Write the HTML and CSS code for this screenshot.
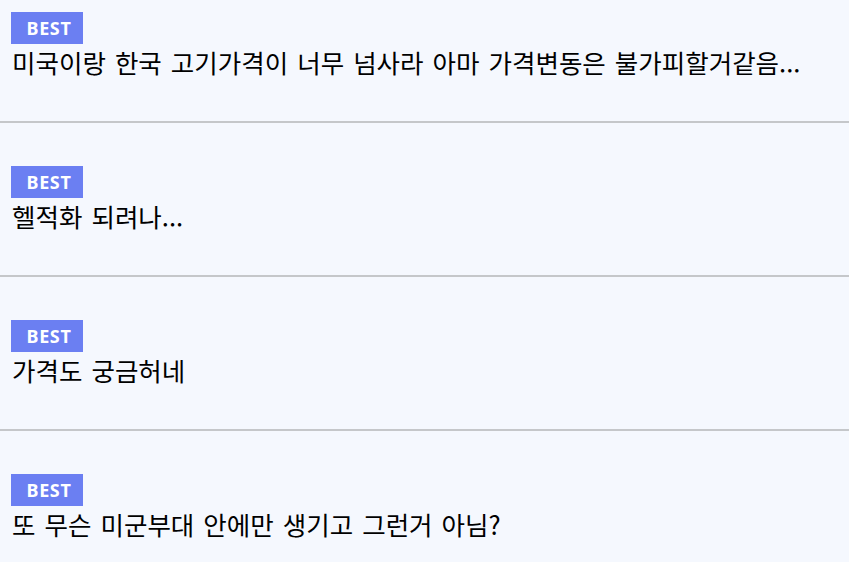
FILE: index.html
```html
<!DOCTYPE html>
<html lang="ko">
<head>
  <meta charset="UTF-8" />
  <title>베스트 댓글</title>
  <link rel="stylesheet" href="styles.css">
</head>
<body>

  <ul class="comments">
    <li class="comment">
      <span class="badge">BEST</span>
      <p class="text">미국이랑 한국 고기가격이 너무 넘사라 아마 가격변동은 불가피할거같음...</p>
    </li>
    <li class="comment">
      <span class="badge">BEST</span>
      <p class="text">헬적화 되려나...</p>
    </li>
    <li class="comment">
      <span class="badge">BEST</span>
      <p class="text">가격도 궁금허네</p>
    </li>
    <li class="comment">
      <span class="badge">BEST</span>
      <p class="text">또 무슨 미군부대 안에만 생기고 그런거 아님?</p>
    </li>
  </ul>

</body>
</html>
```
FILE: styles.css
```css
* {
  box-sizing: border-box;
}

body {
  margin: 0;
  background: #f5f8fe;
  font-family: "Noto Sans CJK KR", "Noto Sans", sans-serif;
  color: #000;
}

.comments {
  list-style: none;
  margin: 0;
  padding: 0;
}

.comment {
  height: 154px;
  padding: 43px 11px 0;
  border-bottom: 2px solid #c5c7ca;
}

.comment:first-child {
  height: 123px;
  padding-top: 12px;
}

.comment:last-child {
  height: auto;
  border-bottom: 0;
}

.badge {
  display: inline-flex;
  align-items: center;
  justify-content: center;
  width: 72px;
  height: 32px;
  padding-left: 4px;
  background: #6b7ff2;
  color: #fff;
  font-family: "Noto Sans", sans-serif;
  font-weight: bold;
  font-size: 18px;
  letter-spacing: 0.6px;
}

.text {
  margin: 2px 0 0 1px;
  font-size: 25.5px;
  line-height: 32px;
  word-spacing: 1.9px;
}
```
